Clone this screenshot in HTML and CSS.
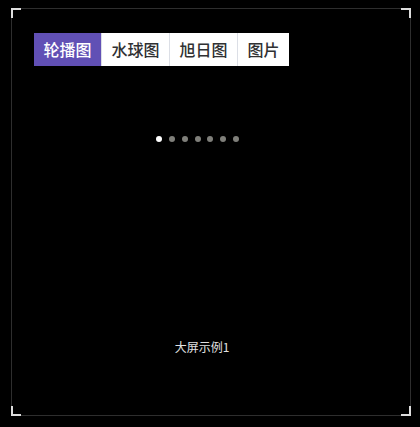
FILE: index.html
```html
<html lang="zh">
<head>
    <meta charset="UTF-8">
    <meta name="viewport" content="width=device-width, initial-scale=1.0">
    <title>大屏示例</title>
    <link rel="stylesheet" href="styles.css">
</head>
<body>
    <div class="screen">
        <span class="corner tl"></span>
        <span class="corner tr"></span>
        <span class="corner bl"></span>
        <span class="corner br"></span>

        <div class="tabs">
            <button class="tab active">轮播图</button>
            <button class="tab">水球图</button>
            <button class="tab">旭日图</button>
            <button class="tab">图片</button>
        </div>

        <div class="content">
            <div class="dots">
                <span class="dot active"></span>
                <span class="dot"></span>
                <span class="dot"></span>
                <span class="dot"></span>
                <span class="dot"></span>
                <span class="dot"></span>
                <span class="dot"></span>
            </div>
            <div class="caption">大屏示例1</div>
        </div>
    </div>
</body>
</html>
```

FILE: styles.css
```css
body {
    margin: 0;
    background-color: #000;
    font-family: "Noto Sans CJK SC", "Noto Sans", sans-serif;
}
.screen {
    position: relative;
    box-sizing: border-box;
    width: 400px;
    height: 408px;
    margin: 8px 0 0 11px;
    padding: 24px 0 0 22px;
    border: 1px solid #2e2e2e;
}
.corner {
    position: absolute;
    width: 8px;
    height: 8px;
    border: 0 solid #ddd;
}
.corner.tl { top: -1px; left: -1px; border-top-width: 2px; border-left-width: 2px; }
.corner.tr { top: -1px; right: -1px; border-top-width: 2px; border-right-width: 2px; }
.corner.bl { bottom: -1px; left: -1px; border-bottom-width: 2px; border-left-width: 2px; }
.corner.br { bottom: -1px; right: -1px; border-bottom-width: 2px; border-right-width: 2px; }
.tabs {
    display: flex;
}
.tab {
    height: 33px;
    margin: 0;
    padding: 0 9.5px;
    font-family: inherit;
    font-size: 16px;
    font-weight: 500;
    line-height: 33px;
    color: #303133;
    background-color: #fff;
    border: none;
    border-left: 1px solid #dcdfe6;
    cursor: pointer;
}
.tab:first-child {
    border-left: none;
}
.tab.active {
    color: #fff;
    background-color: #6150b5;
}
.content {
    display: flex;
    flex-direction: column;
    align-items: center;
    width: 336px;
}
.dots {
    display: flex;
    gap: 6.7px;
    margin-top: 70px;
    padding-right: 9px;
}
.dot {
    width: 6px;
    height: 6px;
    border-radius: 50%;
    background-color: #7f7f7a;
}
.dot.active {
    background-color: #fff;
}
.caption {
    margin-top: 196px;
    font-size: 12px;
    color: #e0e0e0;
}
```
